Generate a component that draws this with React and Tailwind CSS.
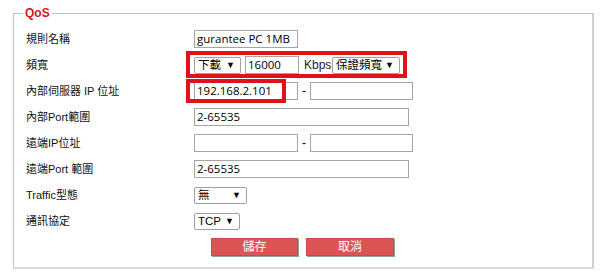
import React from "react";

const font = { fontFamily: '"Liberation Sans", "Noto Sans CJK TC", sans-serif' };

const TextBox = ({ value = "", w }) => (
    <div
        className={`h-[18px] border border-[#a5a5a5] bg-white pl-[2px] text-[11.5px] leading-[16px] text-black whitespace-nowrap overflow-hidden ${w}`}
        style={{ fontFamily: '"Open Sans", "Noto Sans CJK TC", sans-serif' }}
    >
        {value}
    </div>
);

const Dropdown = ({ label, w }) => (
    <div
        className={`h-[17px] border border-[#a0a0a0] rounded-[2px] bg-white flex items-center justify-between pl-[3px] pr-[5px] text-[11.5px] text-black ${w}`}
    >
        <span className="leading-[15px]">{label}</span>
        <span className="text-[9px] leading-[15px]">▼</span>
    </div>
);

const Row = ({ label, children }) => (
    <div className="flex items-center h-[26px]">
        <div className="w-[168px] text-[11px] text-[#111] whitespace-nowrap">{label}</div>
        <div className="relative flex items-center">{children}</div>
    </div>
);

const App = () => {
    return (
        <div className="w-[600px] h-[275px] bg-white overflow-hidden" style={font}>
            <div className="relative ml-[13px] mt-[13px] w-[581px] h-[256px] border border-[#c2c2c2] border-b-2 border-b-[#dcdcdc] border-r-2 border-r-[#d0d0d0] pl-[12px] pt-[12px]">
                <div className="absolute -top-[9px] left-[9px] bg-white px-[2px] text-[12px] font-bold text-[#d7141c] leading-[16px]">
                    QoS
                </div>

                <Row label="規則名稱">
                    <TextBox value="gurantee PC 1MB" w="w-[104px]" />
                </Row>

                <Row label="頻寬">
                    <Dropdown label="下載" w="w-[47px]" />
                    <div className="ml-[4px]">
                        <TextBox value="16000" w="w-[54px]" />
                    </div>
                    <span className="ml-[5px] w-[28px] text-[12px] text-[#1a1a2e]">Kbps</span>
                    <Dropdown label="保證頻寬" w="w-[68px]" />
                    <div className="absolute -left-[8px] -top-[5px] w-[221px] h-[27px] border-4 border-[#e3101a]"></div>
                </Row>

                <Row label="內部伺服器 IP 位址">
                    <TextBox value="192.168.2.101" w="w-[104px]" />
                    <span className="w-[12px] text-center text-[12px]">-</span>
                    <TextBox w="w-[103px]" />
                    <div className="absolute -left-[8px] -top-[3px] w-[100px] h-[24px] border-4 border-[#e3101a]"></div>
                </Row>

                <Row label="內部Port範圍">
                    <TextBox value="2-65535" w="w-[215px]" />
                </Row>

                <Row label="遠端IP位址">
                    <TextBox w="w-[104px]" />
                    <span className="w-[12px] text-center text-[12px]">-</span>
                    <TextBox w="w-[103px]" />
                </Row>

                <Row label="遠端Port 範圍">
                    <TextBox value="2-65535" w="w-[215px]" />
                </Row>

                <Row label="Traffic型態">
                    <Dropdown label="無" w="w-[53px]" />
                </Row>

                <Row label="通訊協定">
                    <Dropdown label="TCP" w="w-[46px]" />
                </Row>

                <div className="flex gap-[8px] ml-[185px] mt-[4px]">
                    <button className="w-[87px] h-[18px] bg-[#dc5555] border border-[#c84a4a] shadow-[1px_1px_0_#8aa3a3] text-white text-[12px] leading-[16px]">
                        儲存
                    </button>
                    <button className="w-[88px] h-[18px] bg-[#dc5555] border border-[#c84a4a] shadow-[1px_1px_0_#8aa3a3] text-white text-[12px] leading-[16px]">
                        取消
                    </button>
                </div>
            </div>
        </div>
    );
};

export default App;
